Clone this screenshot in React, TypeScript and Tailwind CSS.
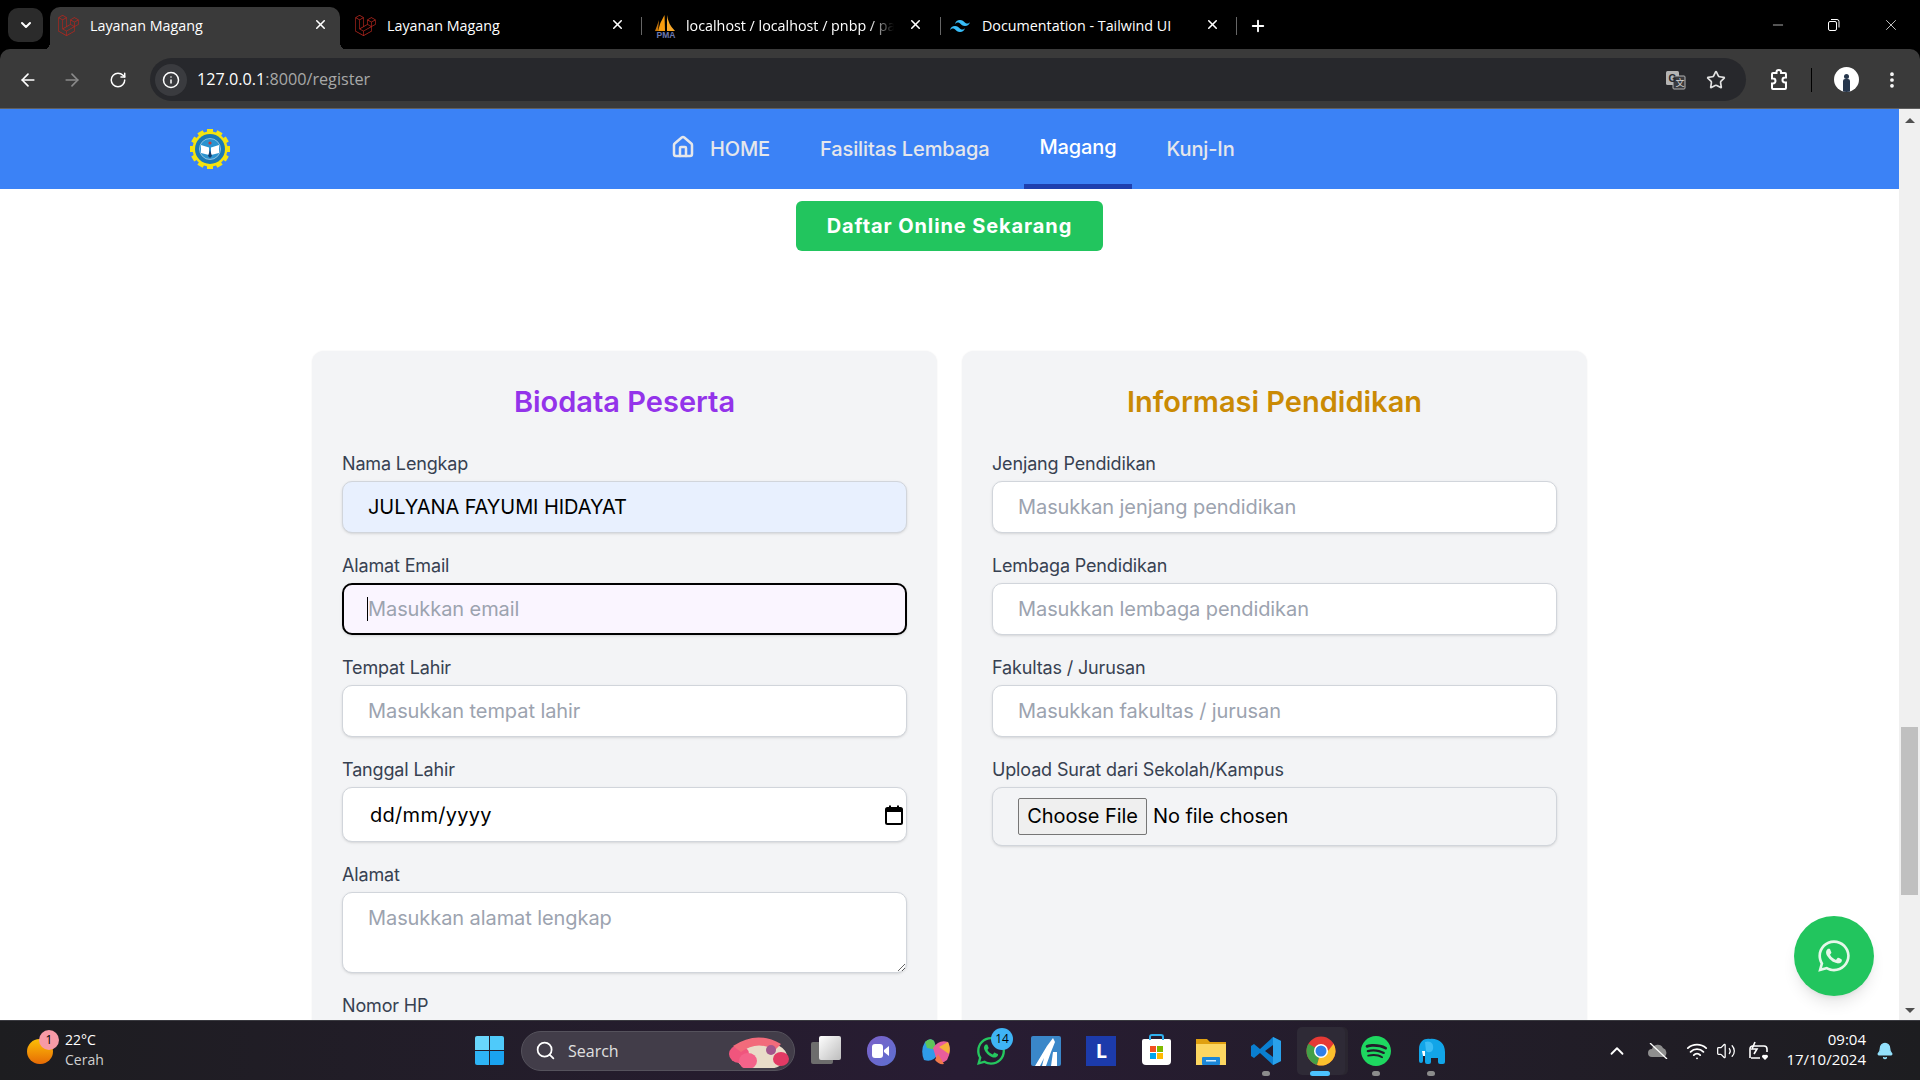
import { ArrowLeft, ArrowRight, ChevronDown, ChevronUp, Info, MoreVertical, Plus, RotateCw, Search, Star, Volume2, Wifi, X, Minus, Bell, Home } from "lucide-react";
import { FaWhatsapp, FaLaravel } from "react-icons/fa";
import { SiTailwindcss, SiSpotify } from "react-icons/si";

const uiFont = "font-['Open_Sans',sans-serif]";

function PmaIcon() {
  return (
    <svg width="24" height="24" viewBox="0 0 24 24">
      <path d="M10.5 1 Q6 8 4 17 L11 17Z" fill="#f89c0e" />
      <path d="M13 1 Q14 10 21 17 L13 17Z" fill="#f8a82a" />
      <path d="M5 6 Q3 12 1 17 L4 17Z" fill="#c9760a" />
      <text x="12" y="23.5" textAnchor="middle" fontSize="8.5" fontWeight="700" fill="#6c78af" fontFamily="Liberation Sans">PMA</text>
    </svg>
  );
}

function Tab({ icon, title, active, className, closeClass, fade }: { icon: React.ReactNode; title: string; active?: boolean; className: string; closeClass: string; fade?: boolean }) {
  return (
    <div className={`${className} relative flex h-[43px] shrink-0 items-center pb-[6px] ${active ? "rounded-t-[10px] bg-[#3a3a3a]" : ""}`}>
      {active && (
        <>
          <span className="absolute -left-[8px] bottom-0 h-[8px] w-[8px] bg-[radial-gradient(circle_at_0_0,transparent_8px,#3a3a3a_8px)]" />
          <span className="absolute -right-[8px] bottom-0 h-[8px] w-[8px] bg-[radial-gradient(circle_at_100%_0,transparent_8px,#3a3a3a_8px)]" />
        </>
      )}
      <span className="flex w-[32px] shrink-0 justify-start">{icon}</span>
      <span className={`overflow-hidden whitespace-nowrap text-[14.3px] text-white ${fade ? "w-[208px] [mask-image:linear-gradient(to_right,black_88%,transparent)]" : ""}`}>
        {title}
      </span>
      <X size={15} strokeWidth={2.5} className={`absolute top-[10px] text-white ${closeClass}`} />
    </div>
  );
}

function BrowserChrome() {
  return (
    <div className={`${uiFont} shrink-0`}>
      <div className="flex h-[50px] items-end bg-black pl-[8px]">
        <div className="mb-[8px] mr-[7px] flex h-[34px] w-[35px] items-center justify-center rounded-[10px] bg-[#2b2b2b]">
          <ChevronDown size={16} strokeWidth={3} className="text-white" />
        </div>
        <Tab active className="w-[290px] pl-[8px]" closeClass="right-[12px]" title="Layanan Magang" icon={<FaLaravel size={21} className="text-[#b3261e]" />} />
        <div className="flex items-center">
          <Tab className="w-[301px] pl-[15px]" closeClass="right-[16px]" title="Layanan Magang" icon={<FaLaravel size={21} className="text-[#b3261e]" />} />
          <div className="mb-[6px] h-[18px] w-px bg-[#666]" />
          <Tab className="w-[298px] pl-[12px]" closeClass="right-[17px]" fade title="localhost / localhost / pnbp / pa" icon={<PmaIcon />} />
          <div className="mb-[6px] h-[18px] w-px bg-[#666]" />
          <Tab className="w-[295px] pl-[9px]" closeClass="right-[16px]" title="Documentation - Tailwind UI" icon={<SiTailwindcss size={20} className="text-[#38bdf8]" />} />
          <div className="mb-[6px] h-[18px] w-px bg-[#666]" />
          <Plus size={18} strokeWidth={2.5} className="mb-[6px] ml-[12px] text-white" />
        </div>
        <div className="mb-[16px] ml-auto flex items-center gap-[41px] pr-[20px] text-white">
          <Minus size={16} strokeWidth={1} />
          <svg width="14" height="14" viewBox="0 0 14 14" fill="none" stroke="white">
            <rect x="1.5" y="3.5" width="8" height="9" rx="1.5" />
            <path d="M4 1.5h6a2 2 0 0 1 2 2v6" />
          </svg>
          <X size={18} strokeWidth={1} />
        </div>
      </div>
      <div className="-mt-px flex h-[60px] items-center rounded-t-[10px] border-b border-[#5f5f5f] bg-[#3a3a3a] pl-[18px] pr-[18px] pt-[2px]">
        <ArrowLeft size={20} strokeWidth={2} className="text-white" />
        <ArrowRight size={20} strokeWidth={2} className="ml-[24px] text-[#8a8a8a]" />
        <RotateCw size={18} strokeWidth={2} className="ml-[27px] text-white" />
        <div className="ml-[23px] flex h-[43px] w-[1599px] items-center rounded-full bg-[#27282c] pl-[5px]">
          <span className="flex h-[32px] w-[32px] items-center justify-center rounded-full bg-[#3a3b3f]">
            <Info size={18} className="text-white" />
          </span>
          <span className="ml-[10px] text-[16.2px] text-white">
            127.0.0.1<span className="text-[#a8a8a8]">:8000/register</span>
          </span>
          <svg width="22" height="22" viewBox="0 0 22 22" className="ml-auto">
            <rect x="1" y="2" width="13" height="14" rx="1.5" fill="#b4b4b4" />
            <rect x="8" y="7" width="12" height="13" rx="1" fill="#3a3b3f" stroke="#b4b4b4" />
            <text x="3.5" y="12.5" fontSize="10" fontWeight="700" fill="#27282c" fontFamily="Liberation Sans">G</text>
            <text x="10.5" y="17" fontSize="9" fill="#d4d4d4" fontFamily="Noto Sans CJK SC">文</text>
          </svg>
          <Star size={20} strokeWidth={2} className="ml-[19px] mr-[20px] text-[#e2e2e2]" />
        </div>
        <svg width="22" height="24" viewBox="0 0 22 24" fill="none" stroke="white" strokeWidth="2" className="ml-[22px]">
          <path d="M8.5 5 V4.2 a2.3 2.3 0 0 1 4.6 0 V5 H17 a1 1 0 0 1 1 1 V9.5 h-1 a2.5 2.5 0 0 0 0 5 h1 V20 a1 1 0 0 1-1 1 H5 a1 1 0 0 1-1-1 V15.5 h1 a2.5 2.5 0 0 0 0-5 H4 V6 a1 1 0 0 1 1-1Z" />
        </svg>
        <div className="ml-[21px] h-[24px] w-px bg-black" />
        <div className="ml-[22px] flex h-[25px] w-[25px] items-end justify-center overflow-hidden rounded-full bg-white">
          <div className="flex flex-col items-center">
            <div className="h-[5px] w-[5px] rounded-full bg-[#27374d]" />
            <div className="h-[13px] w-[7px] rounded-t-[2px] bg-[#27374d]" />
          </div>
        </div>
        <MoreVertical size={20} strokeWidth={2.5} className="ml-[23px] text-white" />
      </div>
    </div>
  );
}

function Logo() {
  const teeth = Array.from({ length: 12 }, (_, i) => i * 30);
  return (
    <svg width="42" height="42" viewBox="0 0 42 42" className="shrink-0">
      {teeth.map((a) => (
        <rect key={a} x="18" y="1" width="6" height="5" fill="#f4e30f" transform={`rotate(${a} 21 21)`} />
      ))}
      <circle cx="21" cy="21" r="17.5" fill="#f4e30f" />
      <circle cx="21" cy="21" r="15" fill="#1c79b5" />
      <circle cx="21" cy="21" r="10.5" fill="#2a93cf" stroke="#bcd9ea" strokeWidth="0.7" />
      <path d="M12 17 L20 19.5 L20 27 L12 25Z" fill="#fff" />
      <path d="M30 17 L22 19.5 L22 27 L30 25Z" fill="#fff" />
      <path d="M19 28 L21 30 L23 28 L21 22Z" fill="#123f70" />
      <circle cx="21" cy="15" r="1.6" fill="#c93a3a" />
    </svg>
  );
}

function Navbar() {
  return (
    <nav className="flex h-[80px] shrink-0 items-center bg-[#3b82f6] pl-[189px] text-[20px] font-medium tracking-[-0.12px] text-[#e5e7eb]">
      <Logo />
      <div className="ml-[425px] flex h-full gap-5">
        <a className="flex h-full items-center gap-[15px] px-[15px]">
          <Home size={24} strokeWidth={2.5} className="mb-1" />
          HOME
        </a>
        <a className="flex h-full items-center px-[15px]">Fasilitas Lembaga</a>
        <a className="flex h-full items-center border-b-[5px] border-[#1e40af] px-[15px] pt-[1px] text-white">Magang</a>
        <a className="flex h-full items-center px-[15px]">Kunj-In</a>
      </div>
    </nav>
  );
}

const inputBase =
  "block w-full rounded-[10px] border border-[#d1d5db] bg-white px-[25px] text-[20px] tracking-[-0.08px] text-black placeholder:text-[#9ca3af] shadow-sm outline-none";

function Field({ label, children }: { label: string; children: React.ReactNode }) {
  return (
    <div className="mb-5">
      <label className="mb-1 block text-[18px] leading-[26px] tracking-[-0.15px] text-[#374151]">{label}</label>
      {children}
    </div>
  );
}

function FormCard({ title, titleColor, children }: { title: string; titleColor: string; children: React.ReactNode }) {
  return (
    <div className="rounded-[12px] bg-[#f3f4f6] px-[30px] pb-[40px] pt-[33px] shadow-[0_0_2px_rgba(0,0,0,0.07)]">
      <h2 className={`mb-[31px] text-center text-[29px] font-semibold leading-[36px] ${titleColor}`}>{title}</h2>
      {children}
    </div>
  );
}

function RegisterForm() {
  return (
    <div className="mx-auto mt-[100px] grid w-[1275px] grid-cols-[625px_625px] gap-[25px]">
      <FormCard title="Biodata Peserta" titleColor="text-[#9333ea]">
        <Field label="Nama Lengkap">
          <input readOnly value="JULYANA FAYUMI HIDAYAT" className={`${inputBase} h-[52px] !bg-[#e8f0fe]`} />
        </Field>
        <Field label="Alamat Email">
          <div className="relative">
            <input readOnly placeholder="Masukkan email" className={`${inputBase} h-[52px] !border-2 !border-black !bg-[#faf5ff] !px-[24px]`} />
            <div className="absolute left-[25px] top-[14px] h-[24px] w-px bg-black" />
          </div>
        </Field>
        <Field label="Tempat Lahir">
          <input readOnly placeholder="Masukkan tempat lahir" className={`${inputBase} h-[52px]`} />
        </Field>
        <Field label="Tanggal Lahir">
          <div className={`${inputBase} flex h-[55px] items-center !pl-[27px] !pr-[3px] !tracking-[0.3px]`}>
            dd/mm/yyyy
            <svg width="18" height="20" viewBox="0 0 18 20" className="ml-auto" fill="none">
              <rect x="1" y="3" width="16" height="16" rx="1.5" stroke="black" strokeWidth="2" />
              <rect x="1" y="3" width="16" height="4" fill="black" />
              <rect x="4" y="0.5" width="2" height="3" fill="black" />
              <rect x="12" y="0.5" width="2" height="3" fill="black" />
            </svg>
          </div>
        </Field>
        <Field label="Alamat">
          <textarea readOnly placeholder="Masukkan alamat lengkap" className={`${inputBase} h-[81px] pt-[10px]`} />
        </Field>
        <Field label="Nomor HP">
          <input readOnly placeholder="Masukkan nomor HP" className={`${inputBase} h-[52px]`} />
        </Field>
      </FormCard>
      <FormCard title="Informasi Pendidikan" titleColor="text-[#ca8a04]">
        <Field label="Jenjang Pendidikan">
          <input readOnly placeholder="Masukkan jenjang pendidikan" className={`${inputBase} h-[52px]`} />
        </Field>
        <Field label="Lembaga Pendidikan">
          <input readOnly placeholder="Masukkan lembaga pendidikan" className={`${inputBase} h-[52px]`} />
        </Field>
        <Field label="Fakultas / Jurusan">
          <input readOnly placeholder="Masukkan fakultas / jurusan" className={`${inputBase} h-[52px]`} />
        </Field>
        <Field label="Upload Surat dari Sekolah/Kampus">
          <div className={`${inputBase} flex h-[59px] items-center pb-[1px] !bg-[#f3f4f6]`}>
            <button className="h-[37px] w-[129px] rounded-[2px] border border-[#767676] bg-[#efefef] text-center">Choose File</button>
            <span className="ml-[6px]">No file chosen</span>
          </div>
        </Field>
      </FormCard>
    </div>
  );
}

function Scrollbar() {
  return (
    <div className="flex w-[21px] shrink-0 flex-col items-center bg-[#f0f0f0] pb-[7px] pt-[9px]">
      <div className="h-0 w-0 border-x-[5px] border-b-[5px] border-x-transparent border-b-[#505050]" />
      <div className="mt-[604px] h-[168px] w-[17px] bg-[#c0c0c0]" />
      <div className="mt-auto h-0 w-0 border-x-[5px] border-t-[5px] border-x-transparent border-t-[#505050]" />
    </div>
  );
}

function TaskIcon({ children, className }: { children: React.ReactNode; className?: string }) {
  return <div className={`relative flex h-[30px] w-[30px] shrink-0 items-center justify-center ${className ?? ""}`}>{children}</div>;
}

function ChromeLogo() {
  return (
    <svg width="30" height="30" viewBox="0 0 30 30">
      <circle cx="15" cy="15" r="14.5" fill="#e53935" />
      <path d="M15 15 L2.4 7.8 A14.5 14.5 0 0 0 11 29 Z" fill="#43a047" />
      <path d="M15 15 L27.6 7.8 A14.5 14.5 0 0 1 11 29 Z" fill="#fbc02d" />
      <path d="M15 8 L27.6 7.8 L22 15Z" fill="#e53935" />
      <circle cx="15" cy="15" r="7" fill="#fff" />
      <circle cx="15" cy="15" r="5.5" fill="#2f7fe8" />
    </svg>
  );
}

function Elephant() {
  return (
    <svg width="30" height="30" viewBox="0 0 30 30">
      <path d="M3 13 C3 5 9 2 14 3 C22 2 29 7 29 16 V26 Q29 28 27 28 H24 Q22 28 22 26 V22 H15 V26 Q15 28 13 28 H11 Q9 28 9 26 V17 L7 18 V25 Q7 27 5 27 Q3 27 3 25Z" fill="#12a5e8" />
      <path d="M9 6 C14 4 18 7 17 13 C16 17 12 17 10 15Z" fill="#3cbdf5" />
      <path d="M6 15 H9 V20 H7Z" fill="#ffffff" />
    </svg>
  );
}

function Taskbar() {
  return (
    <div className={`${uiFont} relative flex h-[60px] shrink-0 items-center border-t border-[#3a3a40] bg-gradient-to-r from-[#1d1d20] via-[#281c33] to-[#1d1d20] text-white`}>
      <div className="ml-[27px] flex w-[448px] items-center">
        <div className="relative mt-[1px] h-[25px] w-[26px] rounded-full bg-gradient-to-b from-[#fbbf06] to-[#e66a05]">
          <span className="absolute -right-[6px] -top-[9px] flex h-[20px] w-[20px] items-center justify-center rounded-full bg-[#f79aa6] text-[12px] text-black">1</span>
        </div>
        <div className="-mt-[2px] ml-[12px] text-[14px] leading-[20px]">
          <div>22°C</div>
          <div className="text-[#d0d0d0]">Cerah</div>
        </div>
      </div>
      <div className="grid h-[29px] w-[29px] grid-cols-2 gap-[1px]">
        <span className="rounded-tl-[2px] bg-[#69d6fb]" />
        <span className="rounded-tr-[2px] bg-[#4fcafa]" />
        <span className="rounded-bl-[2px] bg-[#2eb4f5]" />
        <span className="rounded-br-[2px] bg-[#1aa3f0]" />
      </div>
      <div className="ml-[17px] flex h-[40px] w-[274px] items-center overflow-hidden rounded-full border border-[#55525c] bg-[#423d49] pl-[13px]">
        <Search size={21} className="text-white" />
        <span className="ml-[12px] text-[16px] text-[#e0e0e0]">Search</span>
        <svg width="68" height="34" viewBox="0 0 68 34" className="ml-auto mr-[3px]">
          <ellipse cx="38" cy="22" rx="26" ry="14" fill="#e9dcc8" />
          <ellipse cx="16" cy="20" rx="10" ry="9" fill="#f0557d" />
          <ellipse cx="25" cy="27" rx="9" ry="8" fill="#f4638a" />
          <ellipse cx="58" cy="25" rx="8" ry="7" fill="#e23a64" />
          <path d="M10 12 Q34 -4 58 10 L52 16 Q34 6 18 18Z" fill="#f26b7b" />
          <circle cx="48" cy="16" r="5" fill="#a2568c" />
        </svg>
      </div>
      <div className="ml-[16px] flex items-center gap-[25px]">
        <TaskIcon>
          <div className="absolute bottom-[2px] left-0 h-[22px] w-[22px] rounded-[2px] bg-[#6d6d6d]" />
          <div className="absolute right-0 top-0 h-[24px] w-[22px] rounded-[2px] bg-gradient-to-br from-white to-[#bdbdbd]" />
        </TaskIcon>
        <TaskIcon>
          <div className="flex h-[30px] w-[29px] items-center justify-center rounded-full bg-gradient-to-br from-[#7b61c9] to-[#5b6fd0]">
            <svg width="18" height="14" viewBox="0 0 18 14"><rect width="11" height="14" rx="3" fill="#fff" /><path d="M12 6 L17 2 V12 L12 8Z" fill="#fff" /></svg>
          </div>
        </TaskIcon>
        <TaskIcon>
          <svg width="32" height="32" viewBox="0 0 30 30">
            <path d="M3 24 Q-1 14 4 6 Q9 1 13 5 L17 18 Q12 27 3 24Z" fill="#2f9be8" />
            <path d="M4 6 Q9 1 13 5 L16 14 L6 12Z" fill="#5fc45a" />
            <path d="M27 6 Q31 16 26 24 Q20 29 16 25 L12 12 Q18 3 27 6Z" fill="#e85d9c" />
            <path d="M27 6 Q30 12 28 18 L18 11Z" fill="#f5b13c" />
            <path d="M17 18 L23 28 Q18 29 14 24Z" fill="#f27a4b" />
          </svg>
        </TaskIcon>
        <TaskIcon>
          <FaWhatsapp size={32} className="text-[#25c75f]" />
          <span className="absolute -right-[7px] -top-[8px] flex h-[22px] w-[22px] items-center justify-center rounded-full bg-[#3fb4f5] text-[12px] text-black">14</span>
        </TaskIcon>
        <TaskIcon>
          <div className="flex h-[30px] w-[30px] items-end justify-center overflow-hidden rounded-[2px] bg-[#3a87c9]">
            <svg width="26" height="28" viewBox="0 0 26 28"><path d="M2 28 L14 8 L20 0 L22 4 L18 14 L13 28 H9 L11 20 L7 28Z" fill="#fff" /><path d="M20 14 H24 V28 H18Z" fill="#fff" /></svg>
          </div>
        </TaskIcon>
        <TaskIcon>
          <div className="flex h-[30px] w-[30px] items-center justify-center bg-[#1c3bab] pl-[1px] text-[20px] font-bold text-white">L</div>
        </TaskIcon>
        <TaskIcon>
          <div className="relative mt-[3px] grid h-[26px] w-[29px] grid-cols-2 content-center justify-center gap-[1px] rounded-b-[4px] rounded-t-[2px] bg-white px-[8px]">
            <span className="h-[6px] bg-[#f25022]" />
            <span className="h-[6px] bg-[#7fba00]" />
            <span className="h-[6px] bg-[#00a4ef]" />
            <span className="h-[6px] bg-[#ffb900]" />
            <div className="absolute -top-[5px] left-[7px] h-[6px] w-[15px] rounded-t-[3px] border-x-2 border-t-2 border-[#2fb0ee]" />
          </div>
        </TaskIcon>
        <TaskIcon>
          <svg width="30" height="28" viewBox="0 0 30 28">
            <path d="M0 2 H11 L14 5 H30 V28 H0Z" fill="#e0a010" />
            <rect y="7" width="30" height="21" fill="#fcd661" />
            <rect x="6" y="20" width="18" height="8" rx="1" fill="#1b87d8" />
            <rect x="10" y="23" width="10" height="1.5" fill="#d0ecff" />
          </svg>
        </TaskIcon>
        <TaskIcon>
          <svg width="30" height="30" viewBox="0 0 30 30">
            <path d="M22 1 L30 5 V25 L22 29 L9 17 L3 22 L0 20 V10 L3 8 L9 13Z M22 9 L14 15 L22 21Z" fill="#0a7fd1" fillRule="evenodd" />
            <path d="M22 1 L30 5 V25 L22 29Z" fill="#2aa1ea" />
          </svg>
        </TaskIcon>
        <div className="relative -mx-[9px] flex h-[48px] w-[48px] items-center justify-center rounded-[5px] bg-[#2e2a36] shadow-[3px_0_0_#2a2630]">
          <ChromeLogo />
        </div>
        <TaskIcon><SiSpotify size={30} className="text-[#1ed760]" /></TaskIcon>
        <TaskIcon><Elephant /></TaskIcon>
      </div>
      <span className="absolute left-[1262px] top-[50px] h-[5px] w-[8px] rounded-full bg-[#8c8c8c]" />
      <span className="absolute left-[1310px] top-[50px] h-[5px] w-[20px] rounded-full bg-[#4cc2ff]" />
      <span className="absolute left-[1372px] top-[50px] h-[5px] w-[8px] rounded-full bg-[#8c8c8c]" />
      <span className="absolute left-[1427px] top-[50px] h-[5px] w-[8px] rounded-full bg-[#8c8c8c]" />
      <div className="absolute right-[26px] top-0 flex h-full items-center">
        <ChevronUp size={22} className="mr-[19px] text-white" />
        <svg width="22" height="16" viewBox="0 0 22 16" className="mr-[17px]">
          <path d="M5 14 a4 4 0 0 1 0-8 a6 6 0 0 1 11-1 a5 5 0 0 1 1 9Z" fill="#8e8e8e" />
          <path d="M3 0 L20 16" stroke="#fff" strokeWidth="1.3" />
        </svg>
        <Wifi size={22} className="mr-[8px] text-white" />
        <Volume2 size={20} strokeWidth={1.5} className="mr-[12px] text-white" />
        <svg width="22" height="22" viewBox="0 0 22 22" fill="none" stroke="white" strokeWidth="1.6" className="mr-[16px]">
          <path d="M5 6 H16 a3 3 0 0 1 3 3 v3 M2 18 V9 a3 3 0 0 1 3-3 M3 18 H12" />
          <path d="M7 2 L4 9 H9 L6 14" />
          <path d="M17 20 l-3-3 a2 2 0 0 1 3-2 a2 2 0 0 1 3 2Z" fill="white" stroke="none" />
        </svg>
        <div className="-mt-[3px] text-right text-[15px] leading-[20px]">
          <div>09:04</div>
          <div>17/10/2024</div>
        </div>
        <Bell size={18} fill="#93e1fc" className="ml-[10px] text-[#93e1fc]" />
      </div>
    </div>
  );
}

export default function App() {
  return (
    <div className="flex h-screen w-full flex-col overflow-hidden bg-black font-['Inter',sans-serif]">
      <BrowserChrome />
      <div className="relative flex min-h-0 flex-1">
        <div className="min-w-0 flex-1 overflow-hidden bg-white">
          <Navbar />
          <div className="flex justify-center pt-[12px]">
            <button className="h-[50px] w-[307px] rounded-md bg-[#22c55e] text-[20px] font-bold tracking-[0.9px] text-white">
              Daftar Online Sekarang
            </button>
          </div>
          <RegisterForm />
        </div>
        <Scrollbar />
        <button className="absolute bottom-[24px] right-[46px] flex h-[80px] w-[80px] items-center justify-center rounded-full bg-[#22c55e] text-[#e6f7ea] shadow-lg">
          <FaWhatsapp size={36} />
        </button>
      </div>
      <Taskbar />
    </div>
  );
}
